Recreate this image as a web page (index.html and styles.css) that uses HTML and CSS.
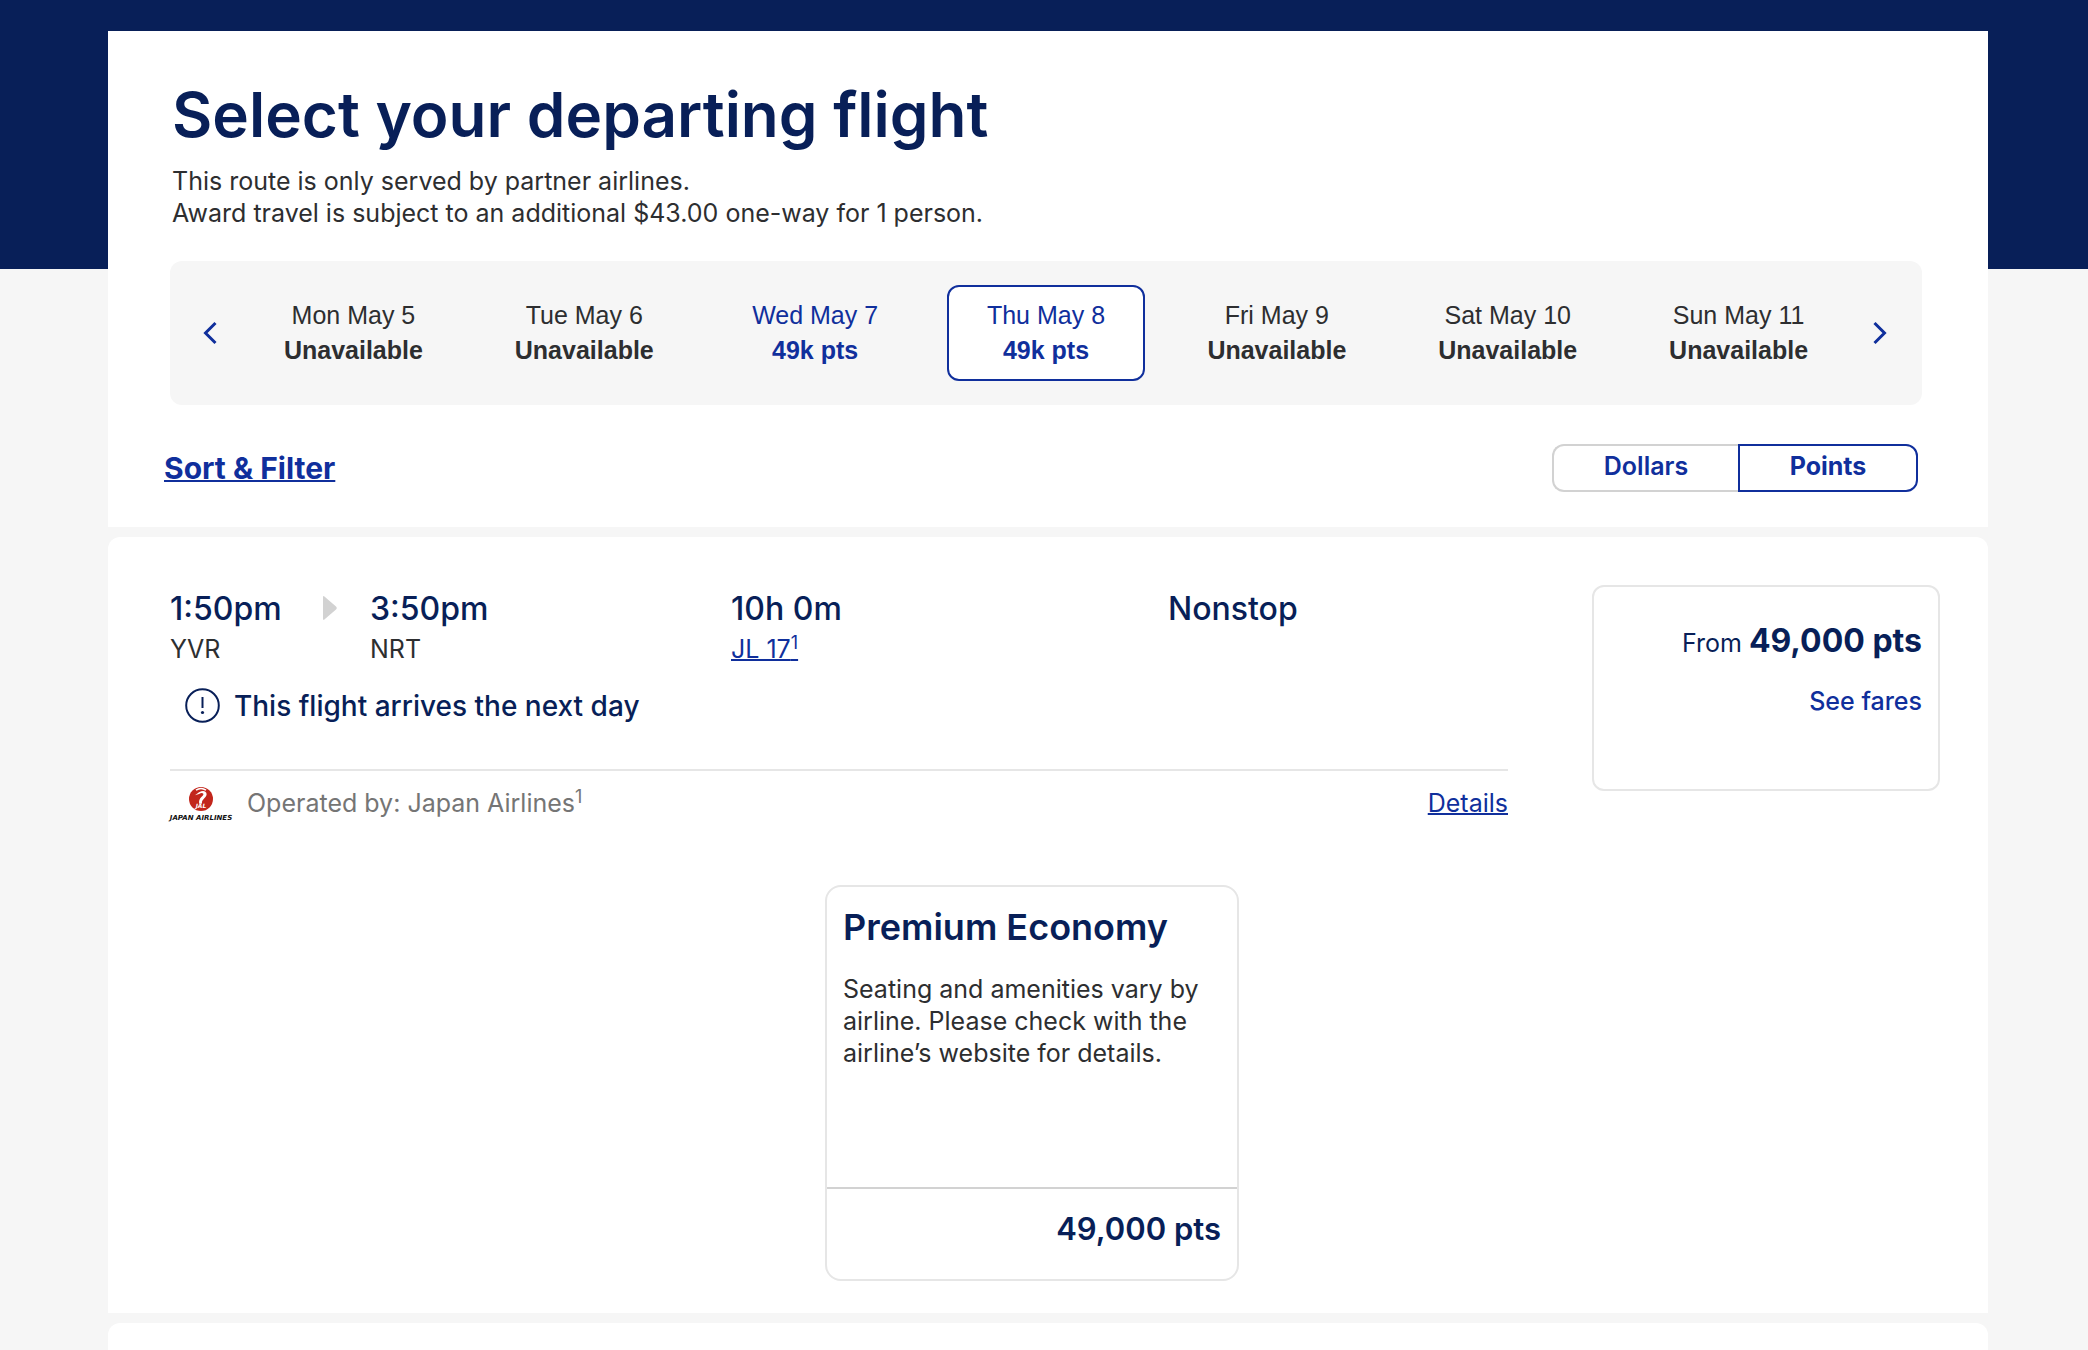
FILE: index.html
```html
<!DOCTYPE html>
<html lang="en">
<head>
    <meta charset="UTF-8">
    <meta name="viewport" content="width=device-width, initial-scale=1.0">
    <title>Select your departing flight</title>
    <link rel="stylesheet" href="styles.css">
</head>
<body>
    <main class="page">
        <section class="panel search">
            <h1>Select your departing flight</h1>
            <p class="intro">This route is only served by partner airlines.<br>Award travel is subject to an additional $43.00 one-way for 1 person.</p>

            <nav class="dates" aria-label="Departure date">
                <button type="button" class="arrow" aria-label="Previous dates">
                    <svg width="14" height="24" viewBox="0 0 14 24"><path d="M12.5 2 2.5 12l10 10"/></svg>
                </button>
                <div class="days">
                    <button type="button" class="day" disabled>Mon May 5 <strong>Unavailable</strong></button>
                    <button type="button" class="day" disabled>Tue May 6 <strong>Unavailable</strong></button>
                    <button type="button" class="day">Wed May 7 <strong>49k pts</strong></button>
                    <button type="button" class="day selected">Thu May 8 <strong>49k pts</strong></button>
                    <button type="button" class="day" disabled>Fri May 9 <strong>Unavailable</strong></button>
                    <button type="button" class="day" disabled>Sat May 10 <strong>Unavailable</strong></button>
                    <button type="button" class="day" disabled>Sun May 11 <strong>Unavailable</strong></button>
                </div>
                <button type="button" class="arrow" aria-label="Next dates">
                    <svg width="14" height="24" viewBox="0 0 14 24"><path d="m1.500 2 10 10-10 10"/></svg>
                </button>
            </nav>

            <div class="toolbar">
                <a class="sort" href="#">Sort &amp; Filter</a>
                <div class="toggle">
                    <button type="button" class="dollars">Dollars</button>
                    <button type="button" class="points">Points</button>
                </div>
            </div>
        </section>

        <section class="panel flight">
            <div class="flight-row">
                <div class="flight-info">
                    <div class="legs">
                        <div class="depart">
                            <div>
                                <div class="time">1:50pm</div>
                                <div class="code">YVR</div>
                            </div>
                            <svg class="play" width="14" height="24" viewBox="0 0 14 24"><path d="M0 1.500Q0-1 1.700.8L13 10.500q1.500 1.500 0 3L1.700 23.200Q0 25 0 22.500Z"/></svg>
                        </div>
                        <div>
                            <div class="time">3:50pm</div>
                            <div class="code">NRT</div>
                        </div>
                        <div>
                            <div class="time">10h 0m</div>
                            <div class="code"><a href="#">JL 17<sup>1</sup></a></div>
                        </div>
                        <div class="time">Nonstop</div>
                    </div>

                    <div class="notice">
                        <svg width="35" height="35" viewBox="0 0 35 35">
                            <circle cx="17.500" cy="17.500" r="16.300" fill="none" stroke="#081f58" stroke-width="2"/>
                            <path d="M17.500 9v11" fill="none" stroke="#081f58" stroke-width="2"/>
                            <circle cx="17.500" cy="24.500" r="1.600" fill="#081f58"/>
                        </svg>
                        This flight arrives the next day
                    </div>

                    <div class="operator">
                        <svg width="62" height="34" viewBox="0 0 62 34" role="img" aria-label="Japan Airlines">
                            <circle cx="31" cy="12" r="12" fill="#c2261c"/>
                            <path d="M26 3.200Q31-.2 36 3.200" fill="none" stroke="#fff" stroke-width="1.600"/>
                            <path d="M25 8.200 29 5.200q5.500-2.600 7.300.6 1.200 2.800-2.200 5.600-2.600 2.200-2.300 5.300h-2.600q-.8-4 2.400-6.900 2.600-2.400 1.500-3.300-1.400-1-4.100.6Z" fill="#fff"/>
                            <text x="31" y="21" class="logo-mark">JAL</text>
                            <text x="31" y="33" class="logo-name">JAPAN AIRLINES</text>
                        </svg>
                        <span>Operated by: Japan Airlines<sup>1</sup></span>
                        <a class="details" href="#">Details</a>
                    </div>
                </div>

                <aside class="price-card">
                    <div>From <strong>49,000 pts</strong></div>
                    <button type="button">See fares</button>
                </aside>
            </div>

            <div class="fares">
                <article class="fare">
                    <div class="fare-body">
                        <h2>Premium Economy</h2>
                        <p>Seating and amenities vary by airline. Please check with the airline’s website for details.</p>
                    </div>
                    <div class="fare-price">49,000 pts</div>
                </article>
            </div>
        </section>

        <section class="panel next"></section>
    </main>
</body>
</html>
```
FILE: styles.css
```css
* { box-sizing: border-box; }
body {
    margin: 0;
    font-family: Inter, "Liberation Sans", sans-serif;
    font-size: 25px;
    line-height: 32px;
    color: #2d2e30;
    background: linear-gradient(#081f58 269px, #f6f6f6 269px);
}
h1, h2, p { margin: 0; }
a { color: #102f9c; text-decoration-thickness: 2px; }
button {
    font: inherit;
    color: #102f9c;
    background: none;
    border: none;
    padding: 0;
    cursor: pointer;
}
sup { font-size: 18px; line-height: 0; }

.page {
    display: flex;
    flex-direction: column;
    gap: 10px;
    min-height: 100vh;
    padding: 31px 100px 0 108px;
}
.panel { background: #fff; border-radius: 12px 12px 0 0; }

/* heading and date picker */
.search { padding: 48px 66px 35px 62px; border-radius: 0; }
h1 { padding-left: 2px; font-size: 62px; line-height: 72px; font-weight: 600; color: #081f58; }
.intro { margin-top: 14px; padding-left: 2px; }
.dates {
    display: flex;
    margin-top: 32px;
    padding: 24px 0;
    background: #f6f6f6;
    border-radius: 12px;
}
.arrow { flex: none; width: 68px; padding-left: 12px; }
.arrow:last-child { padding: 0 16px 0 0; }
.arrow svg { display: block; margin: auto; fill: none; stroke: #102f9c; stroke-width: 3; }
.days { flex: 1; display: grid; grid-template-columns: repeat(7, 1fr); }
.day {
    height: 96px;
    margin: 0 16px;
    border: 2px solid transparent;
    border-radius: 12px;
    font-family: "Liberation Sans", Arial, sans-serif;
    line-height: 35px;
    white-space: nowrap;
}
.day strong { display: block; }
.day:disabled { color: #2d2e30; cursor: default; }
.day.selected { background: #fff; border-color: #102f9c; }

.toolbar {
    display: flex;
    justify-content: space-between;
    align-items: center;
    margin: 39px 4px 0 -6px;
}
.sort { font-size: 30px; font-weight: 700; }
.toggle { display: flex; }
.toggle button {
    height: 48px;
    padding-bottom: 4px;
    border: 2px solid #102f9c;
    font-weight: 600;
}
.toggle .dollars {
    width: 186px;
    border-color: #d2d2d2;
    border-right: none;
    border-radius: 12px 0 0 12px;
}
.toggle .points { width: 180px; border-radius: 0 12px 12px 0; font-weight: 700; }

/* flight result */
.flight { padding: 48px 48px 32px 62px; }
.flight-row { display: flex; gap: 84px; align-items: flex-start; }
.flight-info { flex: 1; }
.legs { display: grid; grid-template-columns: 200px 361px 437px 1fr; }
.depart { display: flex; }
.depart > div { width: 153px; }
.play { margin-top: 11px; fill: #d2d2d2; }
.time { font-size: 32px; line-height: 48px; font-weight: 500; color: #081f58; }
.notice {
    display: flex;
    align-items: center;
    gap: 14px;
    margin-top: 23px;
    padding: 0 15px 46px;
    border-bottom: 2px solid #e6e6e6;
    font-size: 28px;
    font-weight: 500;
    color: #081f58;
}
.notice svg { flex: none; }
.operator { display: flex; align-items: flex-start; gap: 15px; padding-top: 16px; color: #757575; }
.operator svg { overflow: visible; }
.details { margin-left: auto; }
.logo-mark, .logo-name {
    font-family: "DejaVu Sans", sans-serif;
    font-size: 6px;
    font-weight: 700;
    font-style: italic;
    text-anchor: middle;
}
.logo-mark { fill: #fff; }
.logo-name { font-size: 7px; fill: #111; }

.price-card {
    width: 348px;
    min-height: 206px;
    padding: 32px 16px;
    border: 2px solid #e6e6e6;
    border-radius: 12px;
    text-align: right;
    color: #081f58;
}
.price-card div { line-height: 44px; }
.price-card strong { font-size: 32px; }
.price-card button { margin-top: 20px; font-weight: 500; }

.fares { display: flex; justify-content: center; margin-top: 64px; padding-right: 46px; }
.fare { width: 414px; border: 2px solid #e6e6e6; border-radius: 16px; }
.fare-body { min-height: 300px; padding: 18px 12px 0 16px; }
.fare h2 { font-size: 36px; line-height: 44px; font-weight: 600; color: #081f58; }
.fare p { margin-top: 24px; }
.fare-price {
    padding: 20px 16px 30px;
    border-top: 2px solid #d2d2d2;
    font-size: 31px;
    line-height: 40px;
    font-weight: 600;
    text-align: right;
    color: #081f58;
}
.next { flex: 1; }
```
